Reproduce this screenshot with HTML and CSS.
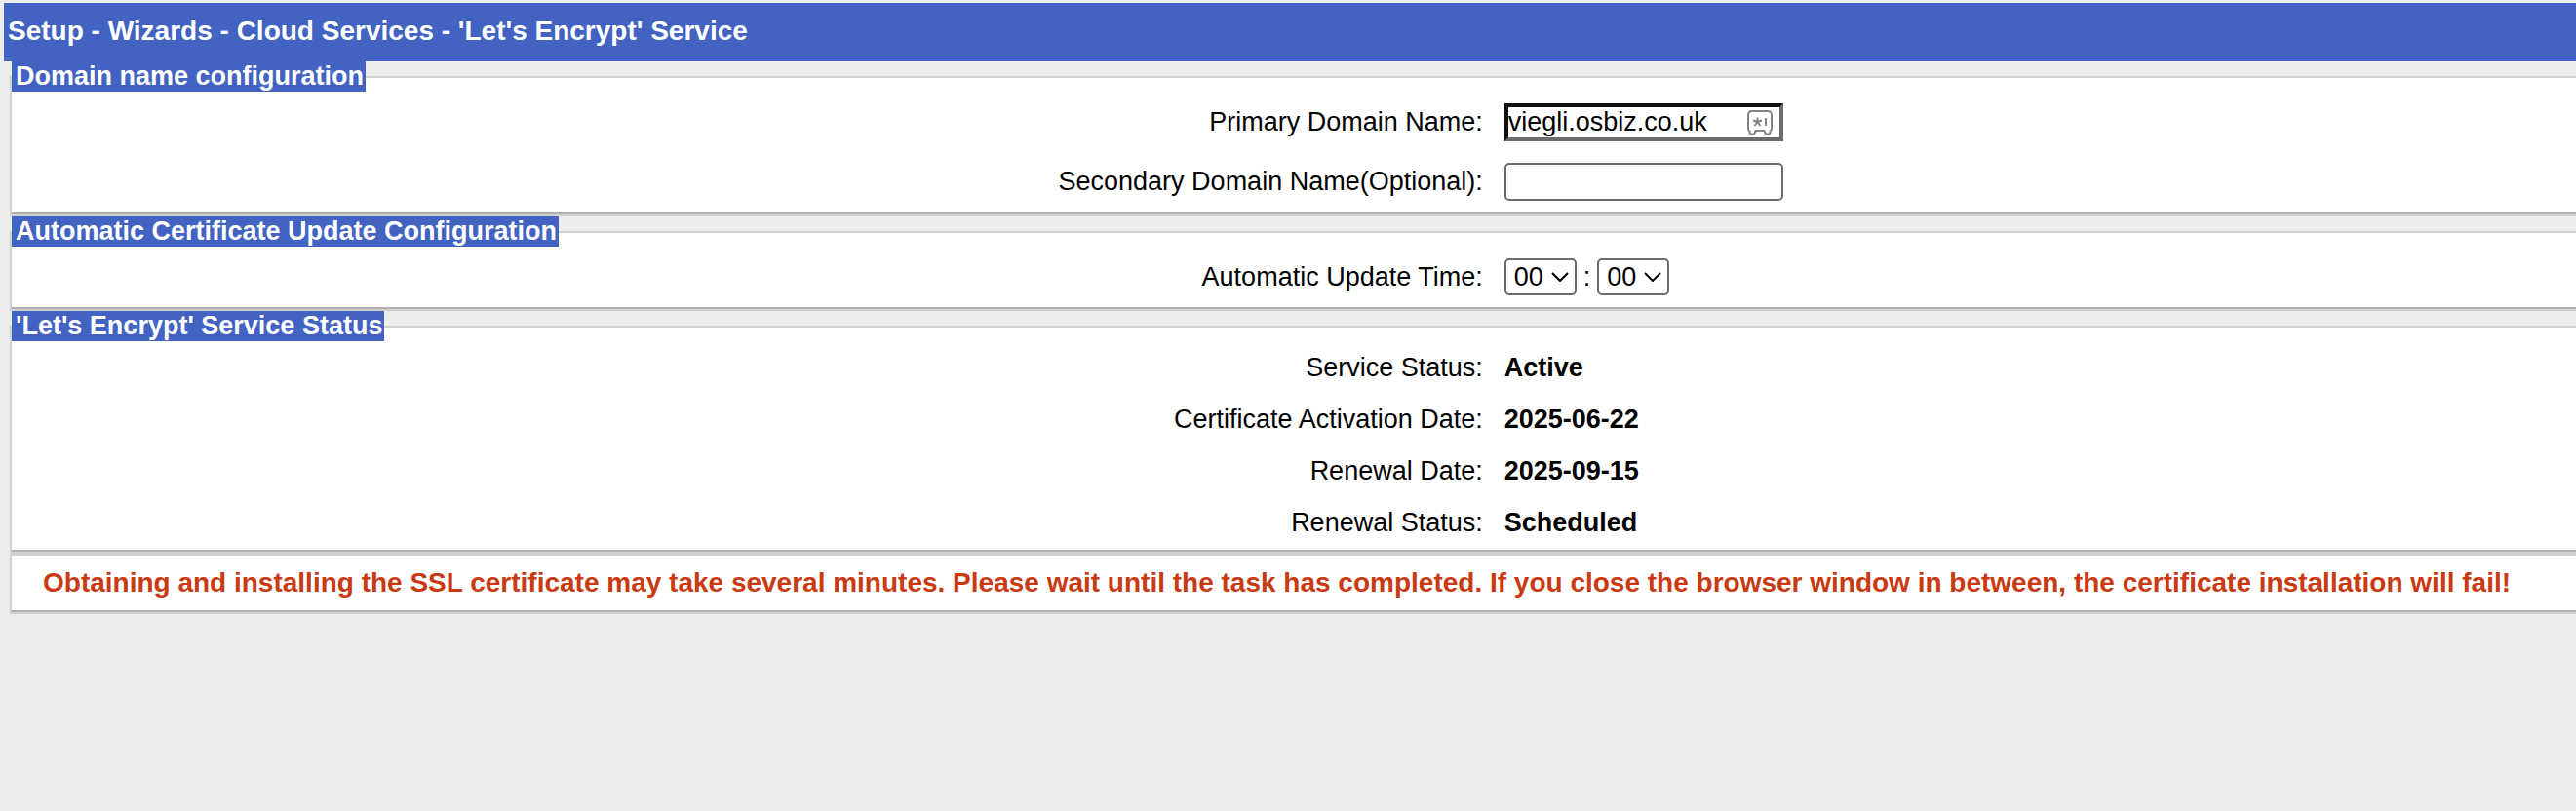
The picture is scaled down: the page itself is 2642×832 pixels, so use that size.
FILE: index.html
```html
<!DOCTYPE html>
<html lang="en">

<head>
    <meta charset="UTF-8">
    <meta name="viewport" content="width=device-width, initial-scale=1.0">
    <title>Setup - Wizards - Cloud Services</title>
    <link rel="stylesheet" href="styles.css">
</head>

<body>
    <header class="title-bar">
        <h1>Setup - Wizards - Cloud Services - 'Let's Encrypt' Service</h1>
    </header>

    <main>
        <form class="wizard">
            <fieldset>
                <legend>Domain name configuration</legend>
                <div class="row">
                    <label for="primary">Primary Domain Name:</label>
                    <div class="value">
                        <div class="field">
                            <input type="text" class="active" name="primary" id="primary" value="viegli.osbiz.co.uk">
                            <svg class="safe" viewBox="0 0 26 26" aria-hidden="true">
                                <path d="M5 1h16q4 0 4 4v14q0 2-1.500 2.500v1q0 2-2 2h-1.500q-1.500 0-2-2l-.5-1.500h-9l-.5 1.500q-.5 2-2 2h-1.500q-2 0-2-2v-1q-1.500-.5-1.500-2.500v-14q0-4 4-4z" />
                                <path d="M10.500 7.500v4.500M6 10.500l4.500 1.500M15 10.500l-4.500 1.500M7.500 16l3-4M13.500 16l-3-4M19 8v8" />
                            </svg>
                        </div>
                    </div>
                </div>
                <div class="row">
                    <label for="secondary">Secondary Domain Name(Optional):</label>
                    <div class="value">
                        <div class="field">
                            <input type="text" name="secondary" id="secondary">
                        </div>
                    </div>
                </div>
            </fieldset>

            <fieldset>
                <legend>Automatic Certificate Update Configuration</legend>
                <div class="row">
                    <label for="hour">Automatic Update Time:</label>
                    <div class="value time">
                        <div class="drop">
                            <select name="hour" id="hour">
                                <option>00</option>
                            </select>
                            <svg viewBox="0 0 18 10" aria-hidden="true"><path d="M1 1l8 8 8-8" /></svg>
                        </div>
                        <span>:</span>
                        <div class="drop">
                            <select name="minute" id="minute" aria-label="Minute">
                                <option>00</option>
                            </select>
                            <svg viewBox="0 0 18 10" aria-hidden="true"><path d="M1 1l8 8 8-8" /></svg>
                        </div>
                    </div>
                </div>
            </fieldset>

            <fieldset>
                <legend>'Let's Encrypt' Service Status</legend>
                <dl>
                    <div class="row">
                        <dt>Service Status:</dt>
                        <dd>Active</dd>
                    </div>
                    <div class="row">
                        <dt>Certificate Activation Date:</dt>
                        <dd>2025-06-22</dd>
                    </div>
                    <div class="row">
                        <dt>Renewal Date:</dt>
                        <dd>2025-09-15</dd>
                    </div>
                    <div class="row">
                        <dt>Renewal Status:</dt>
                        <dd>Scheduled</dd>
                    </div>
                </dl>
            </fieldset>

            <p class="warning">Obtaining and installing the SSL certificate may take several minutes. Please wait until the task has completed. If you close the browser window in between, the certificate installation will fail!</p>
        </form>
    </main>
</body>

</html>
```
FILE: styles.css
```css
body {
    background-color: #ededed;
    color: #000;
    font-family: "Liberation Sans", Arial, Helvetica, sans-serif;
    font-size: 27px;
    line-height: 31px;
    margin: 0;
    padding: 3px 0 0 4px;
}

.title-bar {
    background-color: #4263c1;
    color: #fff;
    padding: 13px 4px 16px;
}

.title-bar h1 {
    font-size: 28px;
    margin: 0;
}

.wizard {
    margin-left: 6px;
}

fieldset,
.warning {
    background-color: #fff;
    border: 2px solid #d0d0d0;
    border-right: 0;
    box-shadow: inset 0 -2px #b0b0b0;
    margin: 0;
}

fieldset {
    min-width: 0;
    padding: 1px 0 3px;
}

legend {
    background-color: #4263c1;
    color: #fff;
    font-weight: bold;
    padding: 0 2px 0 4px;
}

.row {
    align-items: center;
    column-gap: 22px;
    display: grid;
    grid-template-columns: 11fr 8fr;
    padding: 11px 2px 11px 0;
}

.row > label,
dt {
    text-align: right;
}

dl,
dd {
    margin: 0;
}

dd {
    font-weight: bold;
}

.value {
    display: flex;
}

.field,
.drop {
    display: flex;
    position: relative;
}

input,
select {
    appearance: none;
    background-color: #fff;
    border: 2px solid #6b6b6b;
    border-radius: 5px;
    box-sizing: border-box;
    color: #000;
    font: inherit;
    margin: 0;
}

input {
    height: 39px;
    padding: 0 2px;
    width: 286px;
}

input.active {
    border: 4px solid;
    border-color: #101012 #6b6b6b #6b6b6b #101012;
    border-radius: 0;
    padding: 0;
}

select {
    height: 38px;
    padding: 0 8px;
    width: 74px;
}

.time {
    gap: 7px;
    align-items: center;
}

/* icons over the controls */
.field svg,
.drop svg {
    fill: none;
    pointer-events: none;
    position: absolute;
}

.safe {
    height: 26px;
    right: 11px;
    stroke: #858585;
    stroke-width: 2;
    top: 7px;
    width: 26px;
}

.drop svg {
    height: 10px;
    right: 8px;
    stroke: #000;
    stroke-width: 2;
    top: 14px;
    width: 18px;
}

.warning {
    color: #c93a12;
    font-size: 28px;
    font-weight: bold;
    padding: 12px 0 15px 32px;
}
```
